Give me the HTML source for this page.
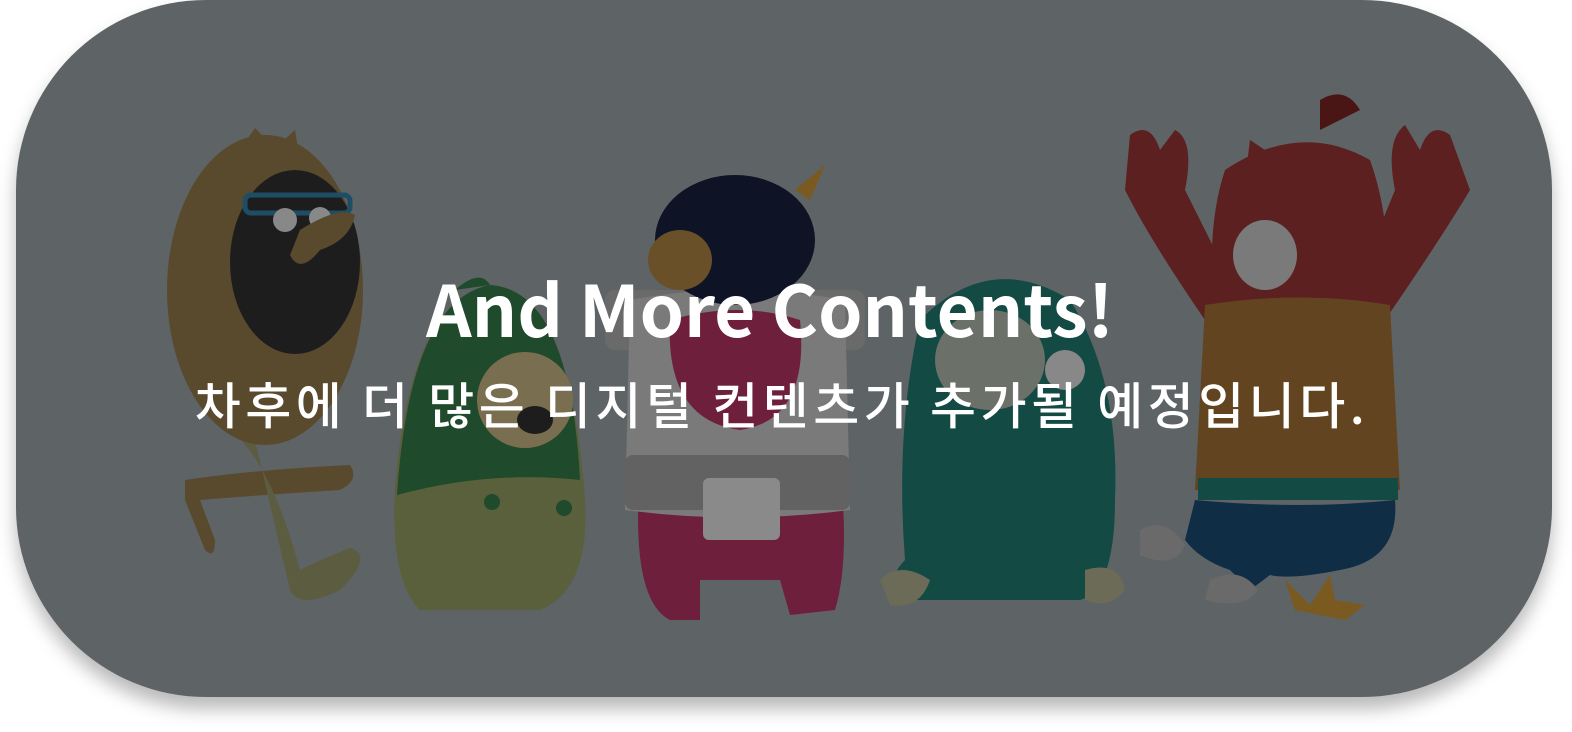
<!DOCTYPE html>
<html><head><meta charset="utf-8"><style>
html,body{margin:0;padding:0;background:#fff;width:1572px;height:732px;overflow:hidden}
.card{position:absolute;left:16px;top:0;width:1536px;height:697px;border-radius:190px;background:#5e6366;overflow:hidden;box-shadow:0 12px 18px rgba(0,0,0,0.28)}
svg{position:absolute;left:-16px;top:0}
.t1{position:absolute;left:0;width:1572px;top:259px;text-align:center;color:#fff;font:bold 71px "Noto Sans CJK KR",sans-serif;line-height:96px;margin-left:-32px;white-space:nowrap}
.t2{position:absolute;left:0;width:1572px;top:368px;text-align:center;color:#fff;font:500 50px "Noto Sans CJK KR",sans-serif;line-height:70px;margin-left:-20px;letter-spacing:4.5px;white-space:nowrap}
</style></head><body>
<div class="card">
<svg width="1572" height="700" viewBox="0 0 1572 700">
<path d="M185 480 Q250 470 350 465 Q360 480 340 490 Q260 495 200 500 L215 540 Q215 560 205 550 L185 500 Z" fill="#594a2e"/>
<path d="M230 430 Q270 460 300 570 Q320 560 350 548 Q375 555 340 590 Q300 610 290 590 L255 440 Z" fill="#5c5c40"/>
<path d="M240 150 L255 128 L275 148 L295 130 L300 160 Z" fill="#594a2e"/>
<ellipse cx="265" cy="290" rx="98" ry="155" fill="#594a2e"/>
<ellipse cx="295" cy="262" rx="65" ry="92" fill="#1e1d1e"/>
<rect x="245" y="195" width="105" height="18" rx="6" fill="none" stroke="#1e4d66" stroke-width="5"/>
<circle cx="285" cy="220" r="12" fill="#888"/><circle cx="320" cy="218" r="11" fill="#888"/>
<path d="M300 230 Q340 205 355 215 Q350 240 320 250 Q300 275 290 255 Z" fill="#594a2e"/>
<path d="M455 290 Q480 268 490 285 Z" fill="#1f4a2b"/>
<path d="M490 285 Q570 290 585 500 Q590 590 540 610 L420 610 Q390 580 395 490 Q410 300 490 285 Z" fill="#5a5f3c"/>
<path d="M490 285 Q570 290 580 480 Q490 470 397 495 Q410 300 490 285 Z" fill="#1f4a2b"/>
<circle cx="525" cy="400" r="48" fill="#7a6e50"/>
<ellipse cx="535" cy="420" rx="18" ry="14" fill="#1e1d1e"/>
<circle cx="492" cy="502" r="8" fill="#1f4a2b"/><circle cx="564" cy="508" r="8" fill="#1f4a2b"/>
<path d="M795 190 L825 165 L810 200 Z" fill="#7a5a20"/>
<path d="M640 470 Q630 600 670 620 L700 620 L700 580 L780 580 L790 615 L835 610 Q850 560 840 470 Z" fill="#6e1f3c"/>
<rect x="605" y="290" width="260" height="60" rx="10" fill="#6a6a6a"/>
<path d="M630 300 Q735 280 845 300 L850 510 Q735 525 625 510 Z" fill="#7a7a7a"/>
<path d="M670 320 Q740 300 800 320 Q810 420 740 430 Q665 420 670 320 Z" fill="#6e1f3c"/>
<rect x="625" y="455" width="225" height="55" rx="8" fill="#626262"/>
<rect x="703" y="478" width="77" height="62" rx="6" fill="#8a8a8a"/>
<ellipse cx="735" cy="240" rx="80" ry="65" fill="#0e1325"/>
<ellipse cx="680" cy="260" rx="32" ry="30" fill="#6a5028"/>
<path d="M920 320 Q990 250 1070 300 Q1120 380 1115 500 Q1115 590 1080 600 L900 600 Q885 580 905 560 Q895 430 920 320 Z" fill="#134a44"/>
<path d="M880 580 Q900 560 930 580 Q920 610 890 605 Z" fill="#6b6b58"/>
<path d="M1085 570 Q1120 560 1125 590 Q1110 610 1085 600 Z" fill="#6b6b58"/>
<ellipse cx="990" cy="360" rx="55" ry="50" fill="#6b7068"/>
<circle cx="1065" cy="370" r="20" fill="#888"/>
<path d="M1130 135 Q1150 120 1160 150 L1175 130 Q1195 140 1185 190 L1240 300 L1205 320 Q1150 240 1125 190 Z" fill="#5c2020"/>
<path d="M1450 135 Q1430 120 1420 150 L1405 125 Q1385 140 1395 190 L1350 300 L1385 320 Q1440 240 1470 190 Z" fill="#5c2020"/>
<path d="M1320 100 Q1345 85 1360 110 L1320 130 Z" fill="#4a1515"/>
<path d="M1225 170 Q1300 120 1370 160 Q1395 230 1385 320 L1215 320 Q1205 230 1225 170 Z" fill="#5c2020"/>
<path d="M1250 140 L1245 180 L1280 160 Z" fill="#5c2020"/>
<ellipse cx="1265" cy="255" rx="32" ry="35" fill="#7a7a7a"/>
<path d="M1205 305 Q1300 290 1390 305 L1400 490 L1195 490 Z" fill="#634420"/>
<path d="M1198 478 L1398 478 L1398 500 L1198 500 Z" fill="#134a44"/>
<path d="M1195 500 Q1300 510 1395 500 Q1400 560 1340 570 Q1290 580 1270 575 L1250 590 L1230 570 Q1200 560 1185 540 Z" fill="#0f2e45"/>
<path d="M1140 530 Q1165 515 1185 545 Q1175 570 1140 555 Z" fill="#6a6a6a"/>
<path d="M1210 580 Q1240 565 1258 590 Q1245 610 1205 600 Z" fill="#6a6a6a"/>
<path d="M1285 580 L1310 605 L1330 575 L1335 600 L1365 605 L1345 620 L1295 610 Z" fill="#7a5a20"/>
</svg>
<div class="t1">And More Contents!</div>
<div class="t2">차후에 더 많은 디지털 컨텐츠가 추가될 예정입니다.</div>
</div>
</body></html>
